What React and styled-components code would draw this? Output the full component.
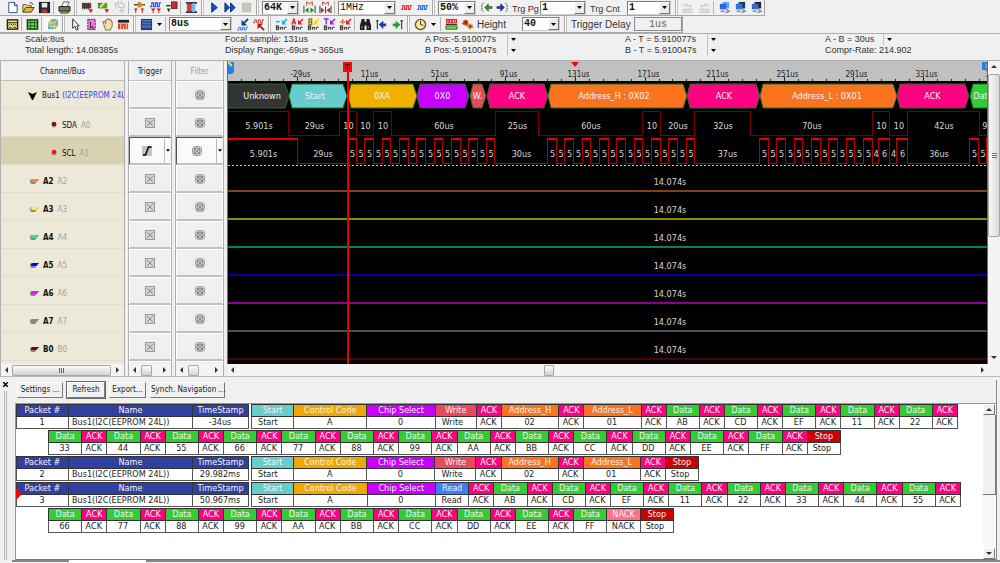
import React from "react";
import styled, { createGlobalStyle, css } from "styled-components";

const ui = `"DejaVu Sans Condensed", "DejaVu Sans", sans-serif`;
const arial = `"Liberation Sans", Arial, sans-serif`;
const mono = `"Liberation Mono", "Courier New", monospace`;

const GlobalStyle = createGlobalStyle`
	* {
		box-sizing: border-box;
	}
	body {
		margin: 0;
		background: #f0f0f0;
		color: #222;
		font-family: ${ui};
		font-size: 8px;
		overflow: hidden;
	}
	button, input, select {
		font: inherit;
		color: inherit;
		margin: 0;
		padding: 0;
	}
`;

const Page = styled.div`
	display: flex;
	flex-direction: column;
	min-height: 100vh;
`;

/* ---------- toolbars ---------- */

const Toolbar = styled.div`
	display: flex;
	align-items: center;
	align-self: flex-start;
	height: ${(p) => p.$height}px;
	padding-left: 4px;
	border-bottom: 1px solid #a8a8a8;
	border-right: 1px solid #a8a8a8;
`;

const IconButton = styled.button`
	display: flex;
	align-items: center;
	justify-content: center;
	flex: none;
	width: ${(p) => p.$width || 16}px;
	height: 14px;
	border: none;
	background: ${(p) => (p.$pressed ? "#fafafa" : "transparent")};
`;

const Divider = styled.span`
	align-self: stretch;
	width: 1px;
	margin: 1px 2px 1px 1px;
	background: #b4b4b4;
`;

const Grip = styled.span`
	align-self: stretch;
	width: 3px;
	margin: 0 2px;
	border-left: 1px solid #a8a8a8;
	border-right: 1px solid #c0c0c0;
	background: #fff;
`;

const ToolLabel = styled.label`
	font-family: ${arial};
	font-size: ${(p) => p.$size || 9}px;
	line-height: 12px;
	width: ${(p) => p.$width}px;
	padding: 2px 0 0 2px;
	color: #333;
	white-space: nowrap;
`;

const ComboBox = styled.span`
	display: flex;
	width: ${(p) => p.$width}px;
	height: 14px;
	margin: 0 2px 0 1px;
	border: 1px solid #808080;
	border-right-color: #ccc;
	border-bottom-color: #ccc;
	background: #fff;
`;

const ComboSelect = styled.select`
	appearance: none;
	flex: 1;
	min-width: 0;
	border: none;
	background: transparent;
	padding-left: 1px;
	font-family: ${mono};
	font-size: 10px;
	line-height: 12px;
	font-weight: ${(p) => (p.$light ? 400 : 700)};
	color: #111;
`;

const ComboArrow = styled.span`
	display: flex;
	align-items: center;
	justify-content: center;
	width: 11px;
	background: #ececec;
	border: 1px solid #fff;
	border-right-color: #777;
	border-bottom-color: #777;
`;

const DelayField = styled.input`
	width: 48px;
	height: 14px;
	border: 1px solid #8a8a8a;
	background: #f0f0f0;
	font-family: ${mono};
	font-size: 10px;
	text-align: center;
	color: #666;
`;

const Down = ({ size = 5 }) => (
	<svg width={size} height="3" viewBox="0 0 5 3">
		<path d="M0 0H5L2.5 3Z" fill="#000" />
	</svg>
);

const Combo = ({ id, label, value, width, light }) => (
	<ComboBox $width={width}>
		<ComboSelect id={id} aria-label={label} defaultValue={value} $light={light}>
			<option>{value}</option>
		</ComboSelect>
		<ComboArrow>
			<Down />
		</ComboArrow>
	</ComboBox>
);

// small "Bar" glyph row shared by the bar buttons
const barBase = (
	<path d="M1.500 8V12.500H4V8.500H1.500M1.500 10.500H4M6 12.500V10H8V12.500M10 12.500V10H12.500" stroke="#222" fill="none" />
);

const barLetter = (color, mark) => (
	<>
		<path d={mark} stroke={color === "#ffd800" ? "#a07800" : color} strokeWidth="1.500" fill="none" />
		<path d="M13 1L9 5" stroke={color} strokeWidth="1.600" />
		<path d="M7.500 2V7H12.500Z" fill={color} />
		{barBase}
	</>
);

const pulse = (color, y) => (
	<path d={`M1 ${y + 4}H3V${y}H5V${y + 4}H7V${y}H9V${y + 4}H11V${y}H13`} stroke={color} strokeWidth="1.200" fill="none" />
);

const monitors = (front, back) => (
	<>
		<rect x="5" y="1" width="7" height="7" fill={back} />
		<rect x="2" y="3" width="7" height="6" fill={front} />
		<path d="M9 9L12 11L8 12.500M3 11H7" stroke="#7888b0" strokeWidth="1.500" fill="none" />
	</>
);

const icons = {
	new: (
		<>
			<path d="M3 1.5H9L12 4.5V12.5H3Z" fill="#fff" stroke="#25508c" />
			<path d="M9 1V5H12" fill="#b8d4f4" stroke="#25508c" />
		</>
	),
	open: (
		<>
			<path d="M1 12V4H5L6 5H10V7" fill="#f6e28a" stroke="#55501c" />
			<path d="M1 12L4 7H13L10 12Z" fill="#e0b83c" stroke="#44400c" />
			<path d="M8 2Q11 1 12 4" stroke="#333" fill="none" />
		</>
	),
	save: (
		<>
			<rect x="1.5" y="1.5" width="11" height="11" fill="#24262c" stroke="#111" />
			<rect x="4" y="2" width="6" height="5" fill="#e8e8e8" />
			<rect x="4" y="9" width="6" height="4" fill="#a83a30" />
		</>
	),
	print: (
		<>
			<path d="M4 6L6 1H12L10 6Z" fill="#fff" stroke="#555" />
			<path d="M1 6H13V11H1Z" fill="#707860" stroke="#222" />
			<path d="M3 11H11V13H3Z" fill="#d8c850" stroke="#333" />
		</>
	),
	chipRed: (
		<>
			<path d="M1 2H11V8H1Z" fill="#843040" />
			<path d="M2 3V9M4 3V9M6 3V9M8 3V9" stroke="#333" />
			<path d="M8 9H13L10.500 13Z" fill="#e01818" />
		</>
	),
	chipGreen: (
		<>
			<path d="M1 2H11V8H1Z" fill="#48a038" />
			<path d="M3 7L8 2" stroke="#f8e060" strokeWidth="2" />
			<path d="M1 3H4M1 7H3" stroke="#d02020" />
			<path d="M8 9H13L10.500 13Z" fill="#e01818" />
		</>
	),
	chipGray: (
		<path d="M1 3H5V1H9V3H12V7H9V9M3 3V9M6 3V7H9M7 10H12L9.500 13Z" stroke="#bbb" fill="none" />
	),
	trigMark: (
		<>
			<path d="M1 4H13M7 1V6" stroke="#553" strokeWidth="1.500" />
			<path d="M5 1H8L11 4L8 7H5Z" fill="#c89028" />
			<path d="M1 8H5L3 11ZM8 8H12L10 11Z" fill="#d81818" />
			<path d="M3 10V13M10 10V13" stroke="#d81818" />
		</>
	),
	trigPulse: (
		<>
			{pulse("#2850d8", 2)}
			<path d="M2 8H7L4.500 11ZM8 8H13L10.500 11Z" fill="#d81818" />
			<path d="M4.500 10V13M10.500 10V13" stroke="#d81818" />
		</>
	),
	trigPage: (
		<>
			<rect x="7" y="1" width="6" height="7" fill="#c83038" stroke="#722" />
			<path d="M1 5H6" stroke="#333" strokeWidth="1.500" />
			<path d="M2 8H6L4 12Z" fill="#333" />
		</>
	),
	compress: (
		<>
			<path d="M1 1H13V3H10V11H13V13H1V11H4V3H1Z" fill="#303848" />
			<path d="M2 3H6L8 7L6 11H2Z" fill="#d04038" />
			<circle cx="9" cy="5" r="2.500" fill="#78b4e8" />
			<circle cx="9" cy="9.500" r="2.500" fill="#78b4e8" />
		</>
	),
	play: <path d="M4 2L10 7L4 12Z" fill="#1450c8" stroke="#0a2c84" />,
	forward: <path d="M1 2L6 7L1 12ZM7 2L12 7L7 12Z" fill="#1450c8" stroke="#0a2c84" />,
	stop: <rect x="2.500" y="2.500" width="9" height="9" fill="#c8c8b8" stroke="#bbb" />,
	zoomIn: (
		<>
			<path d="M4 5V1L7 3L10 1V5" stroke="#c03030" fill="none" />
			<path d="M1 5V13M13 5V13" stroke="#333" />
			<path d="M6 7V13L2 10ZM8 7V13L12 10Z" fill="#209020" />
		</>
	),
	zoomOut: (
		<>
			<path d="M4 5V1L7 3L10 1V5" stroke="#c03030" fill="none" />
			<path d="M1 5V13M13 5V13M7 6V13" stroke="#333" />
			<path d="M2 7V13L6 10ZM12 7V13L8 10Z" fill="#b82848" />
		</>
	),
	pulseRed: pulse("#e83030", 5),
	pulseBlue: pulse("#2a6ce8", 5),
	jumpLeft: (
		<>
			<path d="M4 2L2 4V10L4 12" stroke="#333" strokeDasharray="2 1" fill="none" />
			<path d="M5 7L9 3V6H13V8H9V11Z" fill="#28a028" stroke="#145014" strokeWidth="0.600" />
		</>
	),
	jumpRight: (
		<>
			<path d="M9 7L5 3V6H1V8H5V11Z" fill="#2838c8" stroke="#101858" strokeWidth="0.600" />
			<path d="M10 2L12 4V10L10 12" stroke="#333" strokeDasharray="2 1" fill="none" />
		</>
	),
	pagePrev: <path d="M1 6L5 3V5H9V8M1 9H11V12H1ZM4 9V12M8 9V12" stroke="#c0c0c0" fill="none" />,
	pageNext: <path d="M12 6L8 3V5H4V8M2 9H12V12H2ZM5 9V12M9 9V12" stroke="#c0c0c0" fill="none" />,
	net1: monitors("#2868d8", "#58a8f8"),
	net2: monitors("#2878e8", "#283858"),
	net3: monitors("#3868c8", "#202848"),
	waveView: (
		<>
			<rect x="1.500" y="2" width="11" height="10" fill="#f4e47c" stroke="#222" strokeWidth="1.500" />
			<path d="M2 5H12M3 8L5 6L7 8L9 6L11 8M3 10H6M8 10H11" stroke="#333" fill="none" />
		</>
	),
	listView: (
		<>
			<rect x="1.500" y="2" width="11" height="10" fill="#68d848" stroke="#163c16" strokeWidth="1.500" />
			<path d="M2 5H12M2 8.500H12M5 3V12M9 3V12" stroke="#1c5c1c" />
		</>
	),
	cube: (
		<>
			<path d="M3 4L6 1H13V8L10 12H2Z" fill="#58b0f0" />
			<path d="M2 5H9V12M5 2V9H12M9 5L13 1" stroke="#e8dc60" fill="none" strokeWidth="1.200" />
		</>
	),
	cursor: <path d="M4 1V11L6.500 9L8 13L10 12L8.500 8.500H11Z" fill="#fff" stroke="#222" />,
	selectWave: (
		<>
			<rect x="3" y="1.500" width="8" height="11" fill="#f078d8" stroke="#401040" strokeDasharray="2 1" />
			<path d="M6 4V11L8 9L9 12" stroke="#222" fill="none" />
		</>
	),
	hand: <path d="M3 7L2 4L4 4L5 6V2H7V1H9V2H11V4H12V9L10 13H5Z" fill="#f4dcb0" stroke="#86683c" />,
	ruler: (
		<>
			<rect x="1" y="2" width="12" height="3" fill="#222" />
			<path d="M1 6H12V12H1Z" fill="#d84038" />
			<path d="M4 6V12M7 8V12M10 6V12" stroke="#f4d890" />
		</>
	),
	screen: (
		<>
			<rect x="1.500" y="1.500" width="11" height="11" fill="#4a7cc8" stroke="#1c2c54" />
			<path d="M2 5L4 4L6 5L8 4L10 5L12 4M2 8L4 7L6 8L8 7L10 8L12 7M2 11H12" stroke="#16244c" fill="none" />
		</>
	),
	toBlue: (
		<>
			<path d="M13 1L9 5" stroke="#123c84" strokeWidth="2" />
			<path d="M6 2V8H12Z" fill="#123c84" />
			<path d="M1 13H3V10H5V13H7V10H9V13H11V10H13" stroke="#2878e8" fill="none" />
		</>
	),
	toRed: (
		<>
			<path d="M1 5H3V2H5V5H7V2H9V5H11V2H13" stroke="#e03030" fill="none" />
			<path d="M13 13L9 9" stroke="#a81818" strokeWidth="2" />
			<path d="M6 12V6H12Z" fill="#a81818" />
		</>
	),
	bar: barLetter("#20a8e8", "M1 4H5"),
	barA: barLetter("#e02828", "M1 7L3 1L5 7M2 5H4"),
	barB: barLetter("#ffd800", "M2 1V7M2 1H5V4H2M5 4V7H2"),
	barT: barLetter("#9028e8", "M1 1H6M3.500 1V7"),
	barAll: (
		<>
			<path d="M1 4H7M4 1V7" stroke="#f07820" strokeWidth="1.500" />
			<path d="M13 1L9 5" stroke="#d02828" strokeWidth="1.600" />
			<path d="M7.500 2V7H12.500Z" fill="#d02828" />
			{barBase}
		</>
	),
	find: (
		<>
			<path d="M3 1H6V4H8V1H11L13 8V13H8V8H6V13H1V8Z" fill="#1c1c24" />
			<path d="M3 9V11M10 9V11" stroke="#bbb" />
		</>
	),
	prev: (
		<>
			<path d="M2.500 3V12M1 3H4" stroke="#111" fill="none" />
			<path d="M4 7L9 3V6H12V9H9V12Z" fill="#1c38c0" />
		</>
	),
	next: (
		<>
			<path d="M11.500 3V12M10 3H13" stroke="#111" fill="none" />
			<path d="M10 7L5 3V6H2V9H5V12Z" fill="#20a030" />
		</>
	),
	clock: (
		<>
			<circle cx="7" cy="7" r="5.500" fill="#f8e8a0" stroke="#6c5420" strokeWidth="1.500" />
			<path d="M7 3V7L10 8" stroke="#222" fill="none" />
		</>
	),
	bus: (
		<>
			<rect x="1" y="1" width="12" height="5" fill="#d82838" />
			<path d="M3 2V5M6 2V5M9 2V5M11 2V5" stroke="#fbb" />
			<path d="M1 7H13" stroke="#222" />
			<path d="M1 8.500H13V12H1Z" fill="#70e048" stroke="#286820" />
		</>
	),
	link: (
		<>
			<path d="M1 6H4L9 10H13" stroke="#c03020" strokeWidth="1.500" fill="none" />
			<circle cx="5" cy="5" r="3" fill="#e84828" />
			<circle cx="10" cy="9" r="3" fill="#e8a030" />
			<path d="M4 3V7L7 5ZM9 7V11L12 9Z" fill="#702010" />
		</>
	),
};

const Tool = ({ name, pressed }) => (
	<IconButton aria-label={name} $pressed={pressed}>
		<svg width="13" height="13" viewBox="0 0 14 14">
			{icons[name]}
		</svg>
	</IconButton>
);

const Tools = ({ names }) => names.split(" ").map((n) => <Tool key={n} name={n} />);

const MainToolbar = () => (
	<Toolbar $height={16}>
		<Tools names="new open save" />
		<Divider />
		<Tools names="print" />
		<Grip />
		<Tools names="chipRed chipGreen chipGray" />
		<Divider />
		<Tools names="trigMark trigPulse trigPage" />
		<Divider />
		<Tools names="compress" />
		<Grip />
		<Tools names="play forward stop" />
		<Grip />
		<Combo label="Memory depth" value="64K" width={37} />
		<Tools names="zoomIn zoomOut" />
		<Divider />
		<Combo label="Sample rate" value="1MHz" width={58} light />
		<Tools names="pulseRed pulseBlue" />
		<Grip />
		<Combo label="Position" value="50%" width={38} />
		<Tools names="jumpLeft jumpRight" />
		<ToolLabel htmlFor="page" $width={29}>Trg Pg</ToolLabel>
		<Combo id="page" value="1" width={46} />
		<ToolLabel htmlFor="count" $width={38}>Trg Cnt</ToolLabel>
		<Combo id="count" value="1" width={44} />
		<Grip />
		<Tools names="pagePrev pageNext" />
		<Divider />
		<Tools names="net1 net2 net3" />
	</Toolbar>
);

const ViewToolbar = () => (
	<Toolbar $height={17}>
		<Tools names="waveView" />
		<Divider />
		<Tools names="listView" />
		<Divider />
		<Tool name="cube" pressed />
		<Grip />
		<Tools names="cursor selectWave hand ruler" />
		<Grip />
		<Tools names="screen" />
		<IconButton $width={10} aria-label="screen options"><Down /></IconButton>
		<Divider />
		<Combo label="Scale" value="8us" width={63} />
		<Tools names="toBlue toRed" />
		<Grip />
		<Tools names="bar barA barB barT barAll" />
		<Divider />
		<Tools names="find prev next" />
		<Grip />
		<Tools names="clock" />
		<IconButton $width={11} aria-label="clock options"><Down /></IconButton>
		<Divider />
		<Tools names="bus link" />
		<ToolLabel htmlFor="height" $size={10} $width={46}>Height</ToolLabel>
		<Combo id="height" value="40" width={38} />
		<Grip />
		<ToolLabel htmlFor="delay" $size={10} $width={65}>Trigger Delay</ToolLabel>
		<DelayField id="delay" defaultValue="1us" disabled />
	</Toolbar>
);

/* ---------- status lines ---------- */

const Status = styled.div`
	display: grid;
	grid-template-columns: repeat(5, 1fr);
	height: 28px;
	padding: 0 0 0 25px;
	margin-right: -25px;
	border-top: 1px solid #b0b0b0;
	border-bottom: 1px solid #b0b0b0;
	font-family: ${arial};
	font-size: 9px;
	line-height: 11px;
	color: #333;
	white-space: nowrap;
`;

const StatusLine = styled.div`
	display: flex;
`;

const StatusText = styled.span`
	min-width: ${(p) => p.$width || 0}px;
`;

const StatusArrow = styled.button`
	display: flex;
	align-items: center;
	width: 10px;
	border: none;
	border-left: 1px solid #c4c4c4;
	padding-left: 3px;
	background: none;
`;

const statusCells = [
	{ lines: ["Scale:8us", "Total length: 14.08385s"] },
	{ lines: ["Focal sample: 131us", "Display Range:-69us ~ 365us"] },
	{ lines: ["A Pos:-5.910077s", "B Pos:-5.910047s"], arrows: 2, width: 82 },
	{ lines: ["A - T = 5.910077s", "B - T = 5.910047s"], arrows: 2, width: 82 },
	{ lines: ["A - B = 30us", "Compr-Rate: 214.902"], arrows: 1, width: 58 },
];

const StatusBar = () => (
	<Status>
		{statusCells.map((c) => (
			<div key={c.lines[0]}>
				{c.lines.map((line, i) => (
					<StatusLine key={line}>
						<StatusText $width={c.width}>{line}</StatusText>
						{i < (c.arrows || 0) && (
							<StatusArrow aria-label={`choose ${line}`}><Down /></StatusArrow>
						)}
					</StatusLine>
				))}
			</div>
		))}
	</Status>
);

/* ---------- channel columns ---------- */

const Workspace = styled.div`
	display: flex;
	gap: 3px;
	border-bottom: 1px solid #b8b8b8;
`;

const Column = styled.section`
	display: flex;
	flex-direction: column;
	flex: ${(p) => (p.$width ? "none" : "1")};
	width: ${(p) => (p.$width ? `${p.$width}px` : "auto")};
	min-width: 0;
	border-right: ${(p) => (p.$width ? "1px solid #b0b0b0" : "none")};
	border-left: ${(p) => (p.$width ? "1px solid #b0b0b0" : "none")};
`;

const Pane = styled.div`
	height: 303px;
	overflow: hidden;
`;

const Head = styled.div`
	height: 20px;
	line-height: 22px;
	text-align: center;
	border-bottom: 1px solid #c0c0c0;
	color: ${(p) => (p.$dim ? "#999" : "#222")};
`;

const ChannelRow = styled.div`
	display: flex;
	align-items: center;
	height: 28px;
	padding-top: ${(p) => (p.$bus ? 2 : 5)}px;
	padding-left: ${(p) => (p.$nested ? 48 : p.$bus ? 26 : 29)}px;
	gap: 4px;
	border-bottom: 1px solid #e0dccb;
	background: ${(p) => (p.$selected ? "#d9d2b1" : "#ece9d8")};
	white-space: nowrap;
	overflow: hidden;
	svg {
		flex: none;
	}
`;

const ChannelName = styled.span`
	font-weight: ${(p) => (p.$bold ? 700 : 400)};
	color: #111;
`;

const PortName = styled.span`
	color: #a0a0a0;
`;

const Protocol = styled.span`
	color: #3838ff;
`;

const Cell = styled.button`
	display: flex;
	align-items: center;
	justify-content: center;
	width: 100%;
	height: 28px;
	background: #f0f0f0;
	border: 1px solid #fff;
	border-bottom: 2px solid #c0c0c0;
	${(p) =>
		p.$active &&
		css`
			background: #fafafa;
			border: 1px solid #555;
			border-right-color: #eee;
			border-bottom: 2px solid #c0c0c0;
		`}
`;

const CellIcon = styled.span`
	display: flex;
	flex: 1;
	justify-content: center;
`;

const CellArrow = styled.span`
	display: flex;
	align-items: center;
	justify-content: center;
	width: 6px;
	height: 24px;
	border-left: 1px solid #bbb;
`;

const channels = [
	{ name: "SDA", port: "A0", probe: "#8a1010", nested: true },
	{ name: "SCL", port: "A1", probe: "#ff1010", nested: true, selected: true },
	{ name: "A2", port: "A2", probe: "#ff8040", wave: "#80401c" },
	{ name: "A3", port: "A3", probe: "#ffff00", wave: "#8c8c00" },
	{ name: "A4", port: "A4", probe: "#00ff80", wave: "#008848" },
	{ name: "A5", port: "A5", probe: "#0000ff", wave: "#0000a0" },
	{ name: "A6", port: "A6", probe: "#ff00ff", wave: "#900090" },
	{ name: "A7", port: "A7", probe: "#888888", wave: "#505050" },
	{ name: "B0", port: "B0", probe: "#800000", wave: "#500000" },
];

const Probe = ({ color, dot }) =>
	dot ? (
		<svg width="9" height="9" viewBox="0 0 9 9">
			<circle cx="5" cy="4" r="2.500" fill="#999" />
			<circle cx="5" cy="3" r="2.300" fill={color} />
		</svg>
	) : (
		<svg width="9" height="7" viewBox="0 0 9 7">
			<path d="M0 3Q0 1 2 1H9L5 6H2Q0 6 0 3Z" fill="#888" />
			<path d="M1 3Q1 1 3 1H9L6 4H2Q1 4 1 3Z" fill={color} />
		</svg>
	);

const CrossMark = ({ round }) => (
	<svg width="10" height="10" viewBox="0 0 10 10">
		<rect x="0.500" y="0.500" width="9" height="9" rx={round ? 3 : 0} fill="#d4d4d4" stroke="#999" />
		{round && <circle cx="5" cy="5" r="3" fill="none" stroke="#888" />}
		<path d="M2 2L8 8M8 2L2 8" stroke="#888" />
	</svg>
);

const ScrollTrack = styled.div`
	display: flex;
	align-items: center;
	height: 12px;
	padding: 0 ${(p) => p.$end || 3}px 0 3px;
	background: #f4f4f4;
`;

const ScrollThumb = styled.span`
	display: flex;
	align-items: center;
	justify-content: center;
	width: ${(p) => p.$width}px;
	height: 11px;
	margin-left: ${(p) => p.$offset}px;
	border: 1px solid #a8a8a8;
	border-radius: 1px;
	background: linear-gradient(#fafafa, #d4d4d4);
`;

const ScrollArrow = styled.button`
	display: flex;
	border: none;
	background: none;
	margin-left: ${(p) => (p.$end ? "auto" : "0")};
`;

const Arrow = ({ dir }) => {
	const d = { left: "M4 0V6L1 3Z", right: "M1 0V6L4 3Z", up: "M0 4H6L3 1Z", down: "M0 1H6L3 4Z" };
	return (
		<svg width="6" height="6" viewBox="0 0 6 6">
			<path d={d[dir]} fill="#333" />
		</svg>
	);
};

const HScroll = ({ width, offset, grip, end }) => (
	<ScrollTrack $end={end}>
		<ScrollArrow aria-label="scroll left"><Arrow dir="left" /></ScrollArrow>
		<ScrollThumb $width={width} $offset={offset}>
			{grip && (
				<svg width="7" height="5"><path d="M1.500 0V5M3.500 0V5M5.500 0V5" stroke="#666" /></svg>
			)}
		</ScrollThumb>
		<ScrollArrow $end aria-label="scroll right"><Arrow dir="right" /></ScrollArrow>
	</ScrollTrack>
);

const ChannelColumn = () => (
	<Column $width={125}>
		<Pane>
			<Head>Channel/Bus</Head>
			<ChannelRow $bus>
				<svg width="11" height="10" viewBox="0 0 11 10"><path d="M1 1L5.500 3L10 1L6 9H5Z" fill="#000" /></svg>
				<span>
					<ChannelName>Bus1 </ChannelName>
					<Protocol>(I2C(EEPROM 24L)</Protocol>
				</span>
			</ChannelRow>
			{channels.map((c) => (
				<ChannelRow key={c.name} $nested={c.nested} $selected={c.selected}>
					<Probe color={c.probe} dot={c.nested} />
					<ChannelName $bold={!c.nested}>{c.name}</ChannelName>
					<PortName>{c.port}</PortName>
				</ChannelRow>
			))}
			<ChannelRow />
		</Pane>
		<HScroll width={99} offset={2} grip />
	</Column>
);

const EdgeMark = () => (
	<svg width="10" height="10" viewBox="0 0 10 10">
		<rect width="10" height="10" fill="#c4c4c4" />
		<path d="M1 9H3.500L6.500 1H9.500" stroke="#000" strokeWidth="1.500" fill="none" />
	</svg>
);

const OptionColumn = ({ title, width, round, thumb }) => (
	<Column $width={width}>
		<Pane>
			<Head $dim={round}>{title}</Head>
			<Cell aria-label={`${title} Bus1`}>{round && <CrossMark round />}</Cell>
			{channels.map((c) => (
				<Cell key={c.name} $active={c.selected} aria-label={`${title} ${c.name}`}>
					<CellIcon>{c.selected && !round ? <EdgeMark /> : <CrossMark round={round} />}</CellIcon>
					{c.selected && (
						<CellArrow><Down size={4} /></CellArrow>
					)}
				</Cell>
			))}
			<Cell aria-label={`${title} B1`} />
		</Pane>
		<HScroll width={11} offset={thumb} />
	</Column>
);

/* ---------- wave display ---------- */

const WaveView = styled.div`
	display: flex;
`;

const WavePane = styled(Pane)`
	flex: 1;
	min-width: 0;
	background: #000;
	border-left: 1px solid #2a78d0;
	border-right: 1px solid #2a78d0;
`;

const WaveSvg = styled.svg`
	display: block;
	width: 100%;
	height: 303px;
	font-family: ${ui};
	font-size: 9px;
	text-anchor: middle;
	fill: #d8d8d8;
`;

const RulerText = styled.text`
	font-size: 8px;
	fill: #222;
`;

const segments = [
	[-6, 60, "#333333", "Unknown", 34],
	[61, 118, "#66cccc", "Start", 87],
	[120, 188, "#f0b000", "0XA"],
	[189, 240, "#c800ff", "0X0"],
	[242, 257, "#e84a5c", "W."],
	[259, 319, "#ff0080", "ACK"],
	[320, 458, "#fa7420", "Address_H : 0X02", 386],
	[459, 531, "#ff0080", "ACK", 496],
	[532, 668, "#fa7420", "Address_L : 0X01", 599],
	[669, 740, "#ff0080", "ACK"],
	[742, 800, "#33cc33", "Data", 755],
];

// each edge ends one level, the first level being high
const sda = [
	[60, "5.901s"], [111, "29us"], [128, "10"], [145, "10"], [163, "10"], [267, "60us"],
	[310, "25us"], [414, "60us"], [432, "10"], [466, "20us"], [522, "32us"], [644, "70us"],
	[661, "10"], [679, "10"], [751, "42us"], [770, "9us"],
];

const fives = (start, count) =>
	Array.from({ length: count }, (_, i) => [Math.round(start + ((i + 1) * 26) / 3), "5"]);

const scl = [
	[69, "5.901s"], [119, "29us"], ...fives(119, 17), [319, "30us"], ...fives(319, 17),
	[531, "37us"], ...fives(531, 13), [650, "4"], [661, "6"], [668, "4"], [679, "6"],
	[741, "36us"], [750, "5"], [758, "5"], [775, ""],
];

const Signal = ({ edges, high, low, bright, dark }) => {
	let from = 0;
	return edges.map(([to, label], i) => {
		const start = from;
		const up = i % 2 === 0;
		const thick = up && bright !== dark;
		from = to;
		return (
			<g key={i}>
				<path
					d={`M${start} ${(up ? high : low) + (thick ? 0 : 0.5)}H${to + 1}`}
					stroke={up ? bright : dark}
					strokeWidth={thick ? 2 : 1}
				/>
				<path d={`M${to + 0.5} ${high}V${low + 1}`} stroke={dark} />
				<text x={(start + to) / 2 + 1} y={high + 18}>{label}</text>
			</g>
		);
	});
};

const tickX = (n) => Math.round(347 + n * 13.92) + 0.5;

const Waves = () => (
	<WaveSvg>
		<rect width="100%" height="20" fill="#c0c0c0" />
		{Array.from({ length: 62 }, (_, i) => i - 26).map((n) => (
			<path key={n} d={`M${tickX(n)} ${n % 5 ? 18 : 16}V20`} stroke="#222" />
		))}
		{[-29, 11, 51, 91, 131, 171, 211, 251, 291, 331, 371].map((us) => (
			<RulerText key={us} x={tickX((us - 131) / 8) + 3} y="16">{us}us</RulerText>
		))}
		<path d="M343 1H351L347 6Z" fill="#f00" />
		<path d="M0 1H6V11L4 13H0Z" fill="#1c84e8" />
		<path d="M0 1L4 5" stroke="#f8e020" strokeWidth="2" />
		<path d="M754 1H762V9H754Z" fill="#1c84e8" />
		<path d="M758 3V7H760V3Z" stroke="#c8a080" fill="none" />

		{segments.map(([a, b, color, label, mid]) => (
			<g key={a}>
				<path
					d={`M${a} 35L${a + 3} 23H${b - 3}L${b + 1} 35L${b - 3} 47H${a + 3}Z`}
					fill={color}
					stroke="#1c7020"
				/>
				<text x={mid || (a + b) / 2} y="38" fill="#f4f4f4">{label}</text>
			</g>
		))}

		<Signal edges={sda} high={50} low={74} bright="#780000" dark="#780000" />
		<Signal edges={scl} high={78} low={102} bright="#e80000" dark="#b00000" />
		<path d="M0 104.500H2000" stroke="#ccc" strokeDasharray="2 2" />

		{channels.slice(2).map((c, i) => (
			<g key={c.name}>
				<rect y={129 + i * 28} width="100%" height="2" fill={c.wave} />
				<text x="442" y={124 + i * 28}>14.074s</text>
			</g>
		))}

		<path d="M120 8V303" stroke="#e80000" strokeWidth="2" />
		<rect x="115" y="1" width="9" height="10" fill="#e80c0c" />
		<path d="M117 3.500H122M119.500 3V9" stroke="#600" fill="none" />
	</WaveSvg>
);

const VScroll = styled.div`
	display: flex;
	flex-direction: column;
	align-items: center;
	width: ${(p) => p.$width}px;
	padding: 3px 0;
	background: #f4f4f4;
`;

const VThumb = styled.span`
	display: flex;
	align-items: center;
	justify-content: center;
	width: 100%;
	height: ${(p) => p.$height}px;
	margin: 4px 0 auto;
	border: 1px solid #a8a8a8;
	border-radius: 2px;
	background: linear-gradient(to right, #fafafa, #d8d8d8);
`;

/* ---------- packet list ---------- */

const PacketPanel = styled.div`
	display: flex;
	flex: 1;
	padding: 3px 3px 0 0;
`;

const DockHandle = styled.div`
	display: flex;
	flex-direction: column;
	align-items: center;
	width: 15px;
	padding-right: 5px;
`;

const CloseButton = styled.button`
	display: flex;
	border: none;
	background: none;
	padding: 2px 0 4px;
`;

const HandleLines = styled.span`
	flex: 1;
	width: 3px;
	border: solid #b8b8b8;
	border-width: 0 1px;
`;

const PacketMain = styled.div`
	display: flex;
	flex-direction: column;
	flex: 1;
	min-width: 0;
	border-right: 1px solid #888;
`;

const PacketButtons = styled.div`
	display: flex;
	gap: 4px;
	height: 23px;
	padding: 2px 2px 5px;
`;

const PushButton = styled.button`
	width: ${(p) => p.$width}px;
	background: #f0f0f0;
	border: 1px solid #fff;
	border-right-color: #777;
	border-bottom-color: #777;
	box-shadow: ${(p) => (p.$default ? "0 0 0 1px #666" : "none")};
	line-height: 12px;
	white-space: nowrap;
`;

const PacketBox = styled.div`
	display: flex;
	flex: 1;
	background: #fff;
	border: 1px solid #999;
	border-right: none;
	border-bottom-color: #777;
`;

const PacketLines = styled.div`
	display: flex;
	flex-direction: column;
	flex: 1;
	gap: 1px;
`;

const PacketLine = styled.div`
	position: relative;
	display: flex;
	gap: 2px;
	padding-left: ${(p) => (p.$more ? 32 : 0)}px;
`;

const Marker = styled.svg`
	position: absolute;
	left: 0;
	top: 6px;
`;

const Grid = styled.table`
	table-layout: fixed;
	border-collapse: collapse;
	width: ${(p) => p.$width}px;
	font-size: 9px;
	line-height: 11px;
	text-align: center;
	white-space: nowrap;
`;

const Title = styled.th`
	width: ${(p) => p.$width}px;
	height: 12px;
	padding: 0;
	border: 1px solid #333;
	background: ${(p) => p.$color};
	color: #f4f4f4;
	font-weight: 400;
`;

const Value = styled.td`
	height: 12px;
	padding: ${(p) => (p.$left ? `0 0 0 ${p.$left}px` : "0 1px 0 0")};
	text-align: ${(p) => (p.$left ? "left" : "center")};
	border: 1px solid #555;
	color: #222;
`;

const ClassicButton = styled.button`
	display: flex;
	align-items: center;
	justify-content: center;
	width: 12px;
	height: 11px;
	background: #f0f0f0;
	border: 1px solid #fff;
	border-right-color: #777;
	border-bottom-color: #777;
`;

const ClassicScroll = styled.div`
	display: flex;
	flex-direction: column;
	justify-content: space-between;
	width: 13px;
	background: #f8f8f8;
`;

const ClassicThumb = styled.div`
	height: 80px;
	margin-bottom: auto;
	background: #f0f0f0;
	border-right: 1px solid #777;
	border-bottom: 1px solid #777;
`;

const TabStrip = styled.div`
	display: flex;
	height: 3px;
	padding-left: 12px;
	background: #f0f0f0;
`;

const TabEdge = styled.span`
	flex: ${(p) => (p.$width ? "none" : "1")};
	width: ${(p) => p.$width}px;
	border-top: ${(p) => (p.$open ? "none" : "2px solid #888")};
	background: ${(p) => (p.$open ? "#fff" : "#f0f0f0")};
`;

const fields = {
	"Packet #": { width: 52, color: "#3040a0" },
	Name: { width: 124, color: "#3040a0", left: 3 },
	TimeStamp: { width: 56, color: "#3040a0" },
	Start: { width: 42, color: "#66cccc", left: 6 },
	"Control Code": { width: 73, color: "#f0a800" },
	"Chip Select": { width: 68, color: "#c800ff" },
	Write: { width: 41, color: "#e84a5c", left: 6 },
	Read: { width: 33, color: "#3a80f8" },
	ACK: { width: 25, color: "#ff0080" },
	Address_H: { width: 57, color: "#fa7420" },
	Address_L: { width: 57, color: "#fa7420" },
	Data: { width: 33, color: "#33cc33" },
	NACK: { width: 33, color: "#ff7088" },
	Stop: { width: 33, color: "#cc0000", left: 5 },
};

const ack = ["ACK", "ACK"];
const data = (bytes) => bytes.split(" ").flatMap((b) => [["Data", b], ack]);
const opening = [["Start", "Start"], ["Control Code", "A"], ["Chip Select", "0"]];
const writeTo = [...opening, ["Write", "Write"], ack, ["Address_H", "02"], ack, ["Address_L", "01"], ack];
const stop = ["Stop", "Stop"];

const packets = [
	{
		id: "1",
		time: "-34us",
		lines: [
			{ width: 707, cells: [...writeTo, ...data("AB CD EF 11 22")] },
			{ width: 793, cells: [...data("33 44 55 66 77 88 99 AA BB CC DD EE FF"), stop] },
		],
	},
	{ id: "2", time: "29.982ms", lines: [{ width: 448, cells: [...writeTo, stop] }] },
	{
		id: "3",
		time: "50.967ms",
		current: true,
		lines: [
			{ width: 710, cells: [...opening, ["Read", "Read"], ack, ...data("AB CD EF 11 22 33 44 55")] },
			{
				width: 626,
				cells: [...data("66 77 88 99 AA BB CC DD EE"), ["Data", "FF"], ["NACK", "NACK"], stop],
			},
		],
	},
];

const PacketTable = ({ cells, width }) => (
	<Grid $width={width}>
		<thead>
			<tr>
				{cells.map(([name], i) => (
					<Title key={i} $width={fields[name].width} $color={fields[name].color}>{name}</Title>
				))}
			</tr>
		</thead>
		<tbody>
			<tr>
				{cells.map(([name, value], i) => (
					<Value key={i} $left={fields[name].left}>{value}</Value>
				))}
			</tr>
		</tbody>
	</Grid>
);

const PacketList = () => (
	<PacketLines>
		{packets.map((p) =>
			p.lines.map((line, i) => (
				<PacketLine key={p.id + i} $more={i > 0}>
					{i === 0 && (
						<PacketTable
							width={232}
							cells={[["Packet #", p.id], ["Name", "Bus1(I2C(EEPROM 24L))"], ["TimeStamp", p.time]]}
						/>
					)}
					<PacketTable {...line} />
					{p.current && i === 0 && (
						<Marker width="6" height="12" viewBox="0 0 6 12"><path d="M0 0L6 6L0 12Z" fill="#f00" /></Marker>
					)}
				</PacketLine>
			))
		)}
	</PacketLines>
);

export default function App() {
	return (
		<Page>
			<GlobalStyle />
			<MainToolbar />
			<ViewToolbar />
			<StatusBar />
			<Workspace>
				<ChannelColumn />
				<OptionColumn title="Trigger" width={44} thumb={3} />
				<OptionColumn title="Filter" width={49} thumb={3} round />
				<Column>
					<WaveView>
						<WavePane>
							<Waves />
						</WavePane>
						<VScroll $width={12}>
							<ScrollArrow aria-label="scroll up"><Arrow dir="up" /></ScrollArrow>
							<VThumb $height={163}>
								<svg width="5" height="7"><path d="M0 1.500H5M0 3.500H5M0 5.500H5" stroke="#777" /></svg>
							</VThumb>
							<ScrollArrow aria-label="scroll down"><Arrow dir="down" /></ScrollArrow>
						</VScroll>
					</WaveView>
					<HScroll width={10} offset={308} end={14} />
				</Column>
			</Workspace>
			<PacketPanel>
				<DockHandle>
					<CloseButton aria-label="close">
						<svg width="5" height="5"><path d="M0 0L5 5M5 0L0 5" stroke="#000" strokeWidth="1.500" /></svg>
					</CloseButton>
					<HandleLines />
				</DockHandle>
				<PacketMain>
					<PacketButtons>
						<PushButton $width={46}>Settings ...</PushButton>
						<PushButton $width={38} $default>Refresh</PushButton>
						<PushButton $width={37}>Export...</PushButton>
						<PushButton $width={75}>Synch. Navigation ...</PushButton>
					</PacketButtons>
					<PacketBox>
						<PacketList />
						<ClassicScroll>
							<ClassicButton aria-label="scroll up"><Arrow dir="up" /></ClassicButton>
							<ClassicThumb />
							<ClassicButton aria-label="scroll down"><Arrow dir="down" /></ClassicButton>
						</ClassicScroll>
					</PacketBox>
				</PacketMain>
			</PacketPanel>
			<TabStrip>
				<TabEdge $width={57} />
				<TabEdge $width={77} $open />
				<TabEdge />
			</TabStrip>
		</Page>
	);
}
